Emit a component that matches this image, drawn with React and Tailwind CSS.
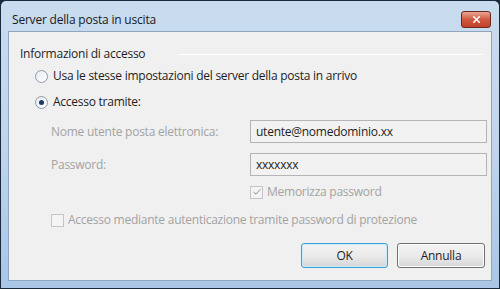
import { Check, X } from 'lucide-react';

function Radio({ checked }) {
  return (
    <span className="flex h-[13px] w-[13px] shrink-0 items-center justify-center rounded-full border border-[#8e9aa8] bg-gradient-to-br from-[#e6edf3] to-[#ffffff]">
      {checked && <span className="h-[5px] w-[5px] rounded-full bg-[#1d3b64]" />}
    </span>
  );
}

function Box({ checked }) {
  return (
    <span className="flex h-[13px] w-[13px] shrink-0 items-center justify-center border border-[#c5c5c5] bg-[#f4f4f4]">
      {checked && <Check size={10} strokeWidth={2.5} className="text-[#a8a8a8]" />}
    </span>
  );
}

export default function App() {
  return (
    <div
      className="h-[289px] w-[500px] overflow-hidden bg-[#1a2a3a] p-px text-[12px] leading-[18px] text-[#1e1e1e]"
      style={{ fontFamily: '"Open Sans", "Noto Sans", sans-serif' }}
    >
      <div className="flex h-full flex-col rounded-t-[5px] bg-gradient-to-b from-[#c9dcef] via-[#bfd5ec] to-[#a9c6e6] px-[7px] pb-[7px]">
        {/* barra del titolo */}
        <div className="flex h-[30px] shrink-0 items-start justify-between pl-[4px]">
          <span className="mt-[10px] text-[12px] tracking-[-0.2px] text-[#1a1a1a]">Server della posta in uscita</span>
          <span className="mr-[1px] mt-[10px] flex h-[17px] w-[30px] items-center justify-center rounded-[3px] border border-[#6b2a20] bg-gradient-to-b from-[#e8a493] via-[#cf5a40] to-[#c2402a]">
            <X size={11} strokeWidth={3.5} className="text-white" />
          </span>
        </div>

        <div className="flex flex-1 flex-col border border-[#8fa6c0] bg-[#f0f0f0] pl-[11px] pr-[4px] pt-[13px] tracking-[-0.25px]">
          <div className="flex items-center gap-[34px] pr-[4px]">
            <span>Informazioni di accesso</span>
            <span className="h-px flex-1 border-b border-b-white bg-[#a0a0a0]" />
          </div>

          <div className="mt-[4px] flex items-center gap-[5px] pl-[15px]">
            <Radio />
            <span>Usa le stesse impostazioni del server della posta in arrivo</span>
          </div>
          <div className="mt-[8px] flex items-center gap-[5px] pl-[15px]">
            <Radio checked />
            <span>Accesso tramite:</span>
          </div>

          <div className="mt-[9px] flex items-center pl-[31px] text-[#a3a3a3]">
            <span className="w-[199px] shrink-0">Nome utente posta elettronica:</span>
            <div className="flex h-[23px] w-[238px] items-center border border-[#b4b4b4] bg-[#f2f2f2] px-[5px] text-[#1e1e1e]">
              utente@nomedominio.xx
            </div>
          </div>
          <div className="mt-[10px] flex items-center pl-[31px] text-[#a3a3a3]">
            <span className="w-[199px] shrink-0">Password:</span>
            <div className="flex h-[23px] w-[238px] items-center border border-[#b4b4b4] bg-[#f2f2f2] px-[5px] text-[#1e1e1e]">
              xxxxxxx
            </div>
          </div>

          <div className="mt-[7px] flex items-center gap-[4px] pl-[230px] text-[#a3a3a3]">
            <Box checked />
            <span>Memorizza password</span>
          </div>
          <div className="mt-[10px] flex items-center gap-[4px] pl-[31px] text-[#a3a3a3]">
            <Box />
            <span>Accesso mediante autenticazione tramite password di protezione</span>
          </div>

          <div className="mt-[14px] flex justify-end gap-[9px] pr-[2px]">
            <button className="h-[25px] w-[87px] rounded-[3px] border border-[#3c9fd0] bg-gradient-to-b from-[#f2f2f2] via-[#ebebeb] to-[#d6d6d6] shadow-[inset_0_0_0_1px_#c8ecfc]">
              OK
            </button>
            <button className="h-[25px] w-[88px] rounded-[3px] border border-[#707070] bg-gradient-to-b from-[#f2f2f2] via-[#ebebeb] to-[#d6d6d6] shadow-[inset_0_0_0_1px_#fcfcfc]">
              Annulla
            </button>
          </div>
        </div>
      </div>
    </div>
  );
}
